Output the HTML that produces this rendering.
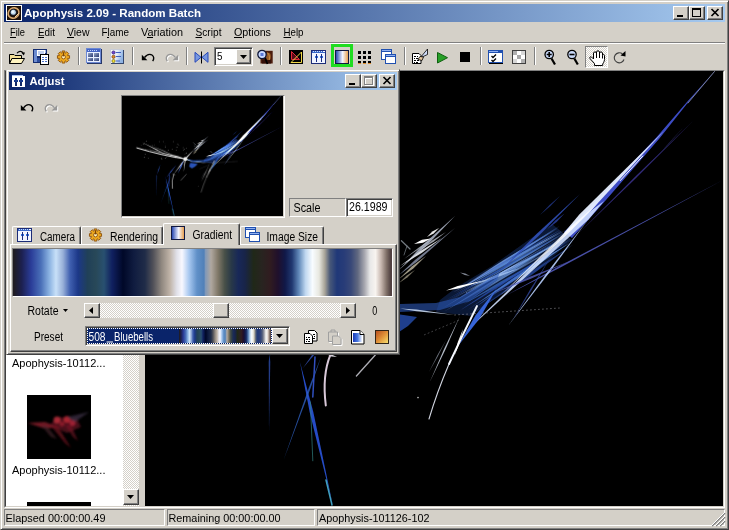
<!DOCTYPE html>
<html><head><meta charset="utf-8"><title>Apophysis</title>
<style>
*{box-sizing:border-box;margin:0;padding:0}
html,body{width:729px;height:530px;overflow:hidden;background:#d4d0c8;font-family:"Liberation Sans",sans-serif;font-size:11px;color:#000}
.a{position:absolute}
.title{background:linear-gradient(to right,#0a246a,#a6caf0)}
.btn{background:#d4d0c8;border:1px solid;border-color:#fff #404040 #404040 #fff;box-shadow:inset -1px -1px 0 #808080}
.raised{border:1px solid;border-color:#d4d0c8 #404040 #404040 #d4d0c8;box-shadow:inset 1px 1px 0 #fff,inset -1px -1px 0 #808080}
.sunk1{border:1px solid;border-color:#808080 #fff #fff #808080}
.sunk2{border:1px solid;border-color:#808080 #fff #fff #808080;box-shadow:inset 1px 1px 0 #404040,inset -1px -1px 0 #d4d0c8}
.dither{background-color:#fff;background-image:linear-gradient(45deg,#d4d0c8 25%,transparent 25%,transparent 75%,#d4d0c8 75%),linear-gradient(45deg,#d4d0c8 25%,transparent 25%,transparent 75%,#d4d0c8 75%);background-size:2px 2px;background-position:0 0,1px 1px}
.sep{width:2px;height:18px;top:47px;border-left:1px solid #808080;border-right:1px solid #fff}
.grad{background:linear-gradient(to right,#201c20 0.13%,#1c2050 2.30%,#2a3c98 4.75%,#4a70b8 7.39%,#88b0e0 9.50%,#c8e0f8 11.35%,#98b0d8 13.19%,#4060b0 15.04%,#1c3888 17.15%,#204058 19.66%,#284858 21.90%,#285070 24.01%,#102060 26.12%,#000828 29.02%,#101c40 31.93%,#202c48 34.83%,#505058 36.94%,#908880 39.21%,#c0b4a8 41.42%,#e0e0e8 43.19%,#f8f8ff 44.59%,#a8c8f0 46.44%,#6090c8 48.55%,#5080b8 50.40%,#8098b8 50.79%,#b0a8a0 52.24%,#807868 54.09%,#485048 55.86%,#283848 57.65%,#182858 59.47%,#182448 61.21%,#202818 63.46%,#282420 65.62%,#301c20 67.81%,#20102c 69.92%,#101848 71.77%,#203870 73.61%,#6088b8 75.41%,#c0d8f0 77.20%,#f8fcff 79.02%,#e8e8e0 80.74%,#a8a498 82.27%,#485878 83.64%,#203878 85.49%,#283c78 87.34%,#384878 89.18%,#606880 90.95%,#a8a8b0 92.77%,#e8e8e8 94.20%,#f8f4f0 95.67%,#c8b8b0 97.10%,#807068 98.55%,#504040 99.66%)}
svg{display:block;overflow:visible}
text{font-family:"Liberation Sans",sans-serif;white-space:pre}
</style></head><body>
<!-- main window frame -->
<div class="a raised" style="left:0;top:0;width:729px;height:530px;background:#d4d0c8"></div>
<div class="a title" style="left:4px;top:4px;width:721px;height:18px"></div>
<div class="a btn" style="left:673px;top:6px;width:16px;height:14px"></div>
<div class="a btn" style="left:689px;top:6px;width:16px;height:14px"></div>
<div class="a btn" style="left:707px;top:6px;width:16px;height:14px"></div>
<div class="a" style="left:677px;top:15px;width:6px;height:2px;background:#000"></div>
<div class="a" style="left:692px;top:8px;width:9px;height:9px;border:1px solid #000;border-top-width:2px"></div>
<svg class="a" style="left:711px;top:9px" width="8" height="7" viewBox="0 0 8 7"><path d="M0.5 0L7.5 7M7.5 0L0.5 7" stroke="#000" stroke-width="1.7"/></svg>
<!-- menu/toolbar separators -->
<div class="a" style="left:4px;top:42px;width:721px;height:1px;background:#808080"></div>
<div class="a" style="left:4px;top:43px;width:721px;height:1px;background:#fff"></div>

<!-- client area: sunken edge, list, splitter, view -->
<div class="a" style="left:4px;top:70px;width:721px;height:438px;border:1px solid;border-color:#808080 #fff #fff #808080"></div>
<div class="a" style="left:5px;top:71px;width:719px;height:436px;border:1px solid;border-color:#404040 #d4d0c8 #d4d0c8 #404040"></div>
<div class="a" style="left:6px;top:72px;width:117px;height:434px;background:#fff"></div>
<div class="a dither" style="left:123px;top:72px;width:16px;height:434px"></div>
<div class="a" style="left:139px;top:71px;width:6px;height:436px;background:#d4d0c8"></div>
<div class="a" style="left:145px;top:71px;width:578px;height:435px;background:#000;overflow:hidden" id="view">
<svg width="578" height="435" viewBox="0 0 578 435"><use href="#fr"/></svg>
</div>
<!-- list contents -->
<div class="a" style="left:27px;top:395px;width:64px;height:64px;background:#000;overflow:hidden" id="thumb">
<svg width="64" height="64" viewBox="0 0 64 64"><defs><filter id="tb" x="0" y="0" width="64" height="64" filterUnits="userSpaceOnUse"><feGaussianBlur stdDeviation="1.1"/></filter></defs><g filter="url(#tb)" opacity=".8">
<path d="M1 28L18 27L34 33L16 33z" fill="#b02838" opacity=".8"/>
<path d="M22 30L32 22L50 24L54 32L40 38z" fill="#80182c" opacity=".7"/>
<circle cx="30" cy="25" r="3.500" fill="#e03848" opacity=".9"/><circle cx="40" cy="24.500" r="3.500" fill="#e03040" opacity=".9"/><circle cx="45.500" cy="28" r="3" fill="#d83048" opacity=".85"/><circle cx="35" cy="29" r="2.500" fill="#c02838" opacity=".8"/>
<path d="M40 22L62 17L48 27z" fill="#50405c" opacity=".7"/>
<path d="M24 31L30 30L44 53L38 48z" fill="#901828" opacity=".7"/>
<path d="M38 30L44 30L51 46L46 42z" fill="#981c30" opacity=".6"/>
<path d="M14 30L20 31L30 44L24 42z" fill="#60303c" opacity=".6"/>
</g></svg></div>
<div class="a" style="left:27px;top:502px;width:64px;height:4px;background:#000"></div>
<div class="a btn" style="left:123px;top:489px;width:16px;height:16px"></div>
<svg class="a" style="left:127px;top:495px" width="7" height="4"><path d="M0 0h7L3.5 4z" fill="#000"/></svg>

<!-- status bar -->
<div class="a sunk1" style="left:4px;top:509px;width:161px;height:17px"></div>
<div class="a sunk1" style="left:167px;top:509px;width:148px;height:17px"></div>
<div class="a sunk1" style="left:317px;top:509px;width:408px;height:17px"></div>
<svg class="a" style="left:711px;top:512px" width="14" height="14" viewBox="0 0 14 14"><path d="M1 14L14 1M5 14L14 5M9 14L14 9" stroke="#808080" stroke-width="1.6"/><path d="M0 14L14 0M4 14L14 4M8 14L14 8" stroke="#fff" stroke-width="1"/></svg>

<!-- ===== Adjust window ===== -->
<div class="a" style="left:6px;top:69px;width:394px;height:286px;background:#d4d0c8;border:1px solid;border-color:#d4d0c8 #404040 #404040 #d4d0c8;box-shadow:inset 1px 1px 0 #fff,inset -1px -1px 0 #808080"></div>
<div class="a title" style="left:9px;top:72px;width:388px;height:18px"></div>
<div class="a btn" style="left:345px;top:74px;width:16px;height:14px"></div>
<div class="a btn" style="left:361px;top:74px;width:16px;height:14px"></div>
<div class="a btn" style="left:379px;top:74px;width:16px;height:14px"></div>
<div class="a" style="left:349px;top:83px;width:6px;height:2px;background:#000"></div>
<div class="a" style="left:365px;top:77px;width:9px;height:9px;border:1px solid #fff;border-top-width:2px"></div>
<div class="a" style="left:364px;top:76px;width:9px;height:9px;border:1px solid #808080;border-top-width:2px"></div>
<svg class="a" style="left:383px;top:77px" width="8" height="7" viewBox="0 0 8 7"><path d="M0.5 0L7.5 7M7.5 0L0.5 7" stroke="#000" stroke-width="1.7"/></svg>
<!-- preview -->
<div class="a" style="left:121px;top:95px;width:164px;height:123px;border:1px solid;border-color:#808080 #fff #fff #808080"></div>
<div class="a" style="left:122px;top:96px;width:161px;height:120px;background:#000;overflow:hidden" id="prev">
<svg width="161" height="120" viewBox="0 0 578 435" preserveAspectRatio="none" style="filter:brightness(1.3)"><use href="#fr"/></svg>
</div>
<!-- scale -->
<div class="a sunk1" style="left:289px;top:198px;width:57px;height:19px"></div>
<div class="a sunk2" style="left:346px;top:198px;width:47px;height:19px;background:#fff"></div>
<!-- tabs -->
<div class="a" id="tabs">
 <div class="a" style="left:10px;top:244px;width:387px;height:108px;border:1px solid;border-color:#fff #404040 #404040 #fff;box-shadow:inset -1px -1px 0 #808080"></div>
 <div class="a tab" style="left:12px;top:226px;width:69px;height:18px"></div>
 <div class="a tab" style="left:81px;top:226px;width:82px;height:18px"></div>
 <div class="a tab" style="left:240px;top:226px;width:84px;height:18px"></div>
 <div class="a tab" style="left:163px;top:223px;width:77px;height:22px;background:#d4d0c8"></div>
</div>
<style>.tab{border:1px solid;border-color:#fff #404040 transparent #fff;border-bottom:none;border-radius:2px 2px 0 0;box-shadow:inset -1px 0 0 #808080}</style>
<!-- gradient bar -->
<div class="a sunk1" style="left:12px;top:248px;width:381px;height:49px"></div>
<div class="a grad" style="left:13px;top:249px;width:379px;height:47px"></div>
<!-- rotate scrollbar -->
<div class="a dither" style="left:84px;top:303px;width:272px;height:15px"></div>
<div class="a btn" style="left:84px;top:303px;width:16px;height:15px"></div>
<div class="a btn" style="left:340px;top:303px;width:16px;height:15px"></div>
<div class="a btn" style="left:213px;top:303px;width:16px;height:15px"></div>
<svg class="a" style="left:89px;top:307px" width="4" height="7"><path d="M4 0v7L0 3.5z" fill="#000"/></svg>
<svg class="a" style="left:346px;top:307px" width="4" height="7"><path d="M0 0v7L4 3.5z" fill="#000"/></svg>
<svg class="a" style="left:63px;top:309px" width="5" height="3"><path d="M0 0h5L2.5 3z" fill="#000"/></svg>
<!-- preset combo -->
<div class="a sunk2" style="left:85px;top:326px;width:205px;height:20px;background:#fff"></div>
<div class="a" style="left:87px;top:328px;width:185px;height:16px;background:#0a246a;outline:1px dotted #fff;outline-offset:-1px"></div>
<div class="a grad" style="left:179px;top:329px;width:92px;height:14px"></div>
<div class="a btn" style="left:272px;top:328px;width:16px;height:16px"></div>
<svg class="a" style="left:276px;top:334px" width="7" height="4"><path d="M0 0h7L3.5 4z" fill="#000"/></svg>

<!-- toolbar combobox -->
<div class="a sunk2" style="left:214px;top:47px;width:39px;height:19px;background:#fff"></div>
<div class="a btn" style="left:236px;top:49px;width:15px;height:15px"></div>
<svg class="a" style="left:240px;top:55px" width="7" height="4"><path d="M0 0h7L3.5 4z" fill="#000"/></svg>
<!-- toolbar separators -->
<div class="a sep" style="left:78px"></div><div class="a sep" style="left:132px"></div><div class="a sep" style="left:186px"></div><div class="a sep" style="left:280px"></div><div class="a sep" style="left:404px"></div><div class="a sep" style="left:480px"></div><div class="a sep" style="left:534px"></div>
<svg width="0" height="0" style="position:absolute"><defs>
<linearGradient id="gBW" x1="0" x2="1" y1="0" y2="0"><stop offset="0" stop-color="#2848b0"/><stop offset=".55" stop-color="#f4f6ff"/><stop offset="1" stop-color="#e8a050"/></linearGradient>
<linearGradient id="gOR" x1="0" x2="1" y1="0" y2="1"><stop offset="0" stop-color="#b85020"/><stop offset=".5" stop-color="#e09038"/><stop offset="1" stop-color="#f8e070"/></linearGradient>
<linearGradient id="gDoc" x1="0" x2="1" y1="0" y2="0"><stop offset="0" stop-color="#1838b8"/><stop offset=".5" stop-color="#4878e0"/><stop offset="1" stop-color="#f0f4ff"/></linearGradient>
<linearGradient id="gLst" x1="0" x2="1" y1="0" y2="0.300"><stop offset="0" stop-color="#ffffff"/><stop offset=".55" stop-color="#e4ecf8"/><stop offset="1" stop-color="#90b4e4"/></linearGradient><linearGradient id="gSq" x1="0" x2="1" y1="0" y2="1"><stop offset="0" stop-color="#98a8c8"/><stop offset="1" stop-color="#283870"/></linearGradient>
<!-- adjust icon 15x14 -->
<g id="iAdj" shape-rendering="crispEdges"><rect x="0" y="0" width="15" height="14" fill="#1c2c78"/><rect x="1" y="1" width="13" height="2" fill="#3868c8"/><rect x="1" y="3" width="13" height="10" fill="#f0f4ff"/><rect x="2" y="1" width="1" height="1" fill="#c8dcff"/><rect x="4" y="1" width="1" height="1" fill="#c8dcff"/><rect x="6" y="1" width="1" height="1" fill="#c8dcff"/><rect x="8" y="1" width="1" height="1" fill="#c8dcff"/><rect x="10" y="1" width="1" height="1" fill="#c8dcff"/><rect x="12" y="1" width="2" height="1" fill="#fff"/><rect x="5" y="4" width="1" height="8" fill="#182c80"/><rect x="10" y="4" width="1" height="8" fill="#182c80"/><rect x="4" y="6" width="3" height="2" fill="#3070e0"/><rect x="9" y="6" width="3" height="2" fill="#3070e0"/><rect x="5" y="6" width="1" height="2" fill="#182c80"/><rect x="10" y="6" width="1" height="2" fill="#182c80"/></g>
<!-- gear 13x12 -->
<g id="iGear"><path d="M5.15 -0.05L7.85 -0.05L7.93 1.95L8.35 2.12L9.82 0.76L11.74 2.68L10.38 4.15L10.55 4.57L12.55 4.65L12.55 7.35L10.55 7.43L10.38 7.85L11.74 9.32L9.82 11.24L8.35 9.88L7.93 10.05L7.85 12.05L5.15 12.05L5.07 10.05L4.65 9.88L3.18 11.24L1.26 9.32L2.62 7.85L2.45 7.43L0.45 7.35L0.45 4.65L2.45 4.57L2.62 4.15L1.26 2.68L3.18 0.76L4.65 2.12L5.07 1.95z" fill="#eca820" stroke="#8c5008" stroke-width="0.9" stroke-linejoin="round"/><circle cx="6.5" cy="6" r="1.9" fill="#fff4c0" stroke="#8c5008" stroke-width="0.9"/><rect x="5.9" y="1.2" width="1.2" height="4.2" fill="#7c4408"/></g>
<!-- gradient icon 14x14 -->
<g id="iGrad" shape-rendering="crispEdges"><rect x="0" y="0" width="14" height="14" fill="#101840"/><rect x="1" y="1" width="12" height="12" fill="url(#gBW)"/></g>
<!-- windows icon 15x15 -->
<g id="iWin" shape-rendering="crispEdges"><rect x="0" y="0" width="11" height="11" fill="#2050b0"/><rect x="1" y="3" width="9" height="7" fill="#fff"/><rect x="1" y="1" width="9" height="1" fill="#90b0f0"/><rect x="4" y="5" width="11" height="10" fill="#2050b0"/><rect x="5" y="8" width="9" height="6" fill="#fff"/><rect x="5" y="6" width="9" height="1" fill="#90b0f0"/></g>
<!-- undo 13x8 -->
<g id="iUndo"><path d="M0.300 1.200V6.800H5.900z" stroke="none"/><path d="M3 4C5 1.300 8.200 0.100 10.500 1.500C12.600 2.800 12.700 5.400 11.200 7.600" fill="none" stroke-width="1.400"/></g>
</defs></svg>

<!-- toolbar icons -->
<svg class="a" style="left:0;top:44px" width="729" height="26" viewBox="0 44 729 26">
<!-- open folder -->
<g transform="translate(9,50)"><path d="M0.500 13.500V4.500H5L6 5.500H12.500V8.500H3z" fill="#f4e098" stroke="#000" stroke-width="1"/><path d="M0.500 13.500L3 8.500H15.500L12.500 13.500z" fill="#fff4c0" stroke="#000" stroke-width="1"/><path d="M8 3.300C9.500 0.800 12.500 0.600 14.200 3" fill="none" stroke="#000" stroke-width="1.200"/><path d="M12.200 2.600h3.800l-1.200 3z" fill="#000"/></g>
<!-- save -->
<g transform="translate(33,49)" shape-rendering="crispEdges"><rect x="0" y="0" width="14" height="14" fill="#142c70"/><rect x="1" y="1" width="3" height="12" fill="#6c8cd0"/><rect x="4" y="1" width="8" height="6" fill="#fff"/><rect x="5" y="2" width="6" height="4" fill="#c0d0f0"/><rect x="12" y="1" width="1" height="3" fill="#a0b8e8"/><rect x="4" y="9" width="5" height="4" fill="#2c4c9c"/><rect x="7" y="5" width="9" height="11" fill="#000"/><rect x="8" y="6" width="7" height="9" fill="#fff"/><rect x="9" y="8" width="2" height="1" fill="#4870c8"/><rect x="12" y="8" width="2" height="1" fill="#4870c8"/><rect x="9" y="10" width="2" height="1" fill="#4870c8"/><rect x="12" y="10" width="2" height="1" fill="#4870c8"/><rect x="9" y="12" width="2" height="1" fill="#4870c8"/><rect x="12" y="12" width="2" height="1" fill="#4870c8"/></g>
<use href="#iGear" x="57" y="51"/>
<!-- grid window -->
<g transform="translate(86,48)" shape-rendering="crispEdges"><rect x="1" y="1" width="15" height="15" fill="#283868"/><rect x="0" y="0" width="15" height="15" fill="#6c88d4"/><rect x="1" y="1" width="13" height="3" fill="#4464c4"/><rect x="2" y="2" width="1" height="1" fill="#c0d0f8"/><rect x="4" y="2" width="1" height="1" fill="#c0d0f8"/><rect x="6" y="2" width="1" height="1" fill="#c0d0f8"/><rect x="8" y="2" width="1" height="1" fill="#c0d0f8"/><rect x="10" y="2" width="1" height="1" fill="#c0d0f8"/><rect x="1" y="4" width="13" height="10" fill="#eaf0ff"/><rect x="2" y="5" width="5" height="4" fill="url(#gSq)"/><rect x="8" y="5" width="5" height="4" fill="url(#gSq)"/><rect x="2" y="10" width="5" height="3" fill="url(#gSq)"/><rect x="8" y="10" width="5" height="3" fill="url(#gSq)"/></g>
<!-- list -->
<g transform="translate(110,49)"><rect x="1" y="1" width="13" height="14" fill="#34466c" shape-rendering="crispEdges"/><rect x="0" y="0" width="13" height="14" fill="#c8ccd8" shape-rendering="crispEdges"/><rect x="1" y="1" width="12" height="13" fill="url(#gLst)" shape-rendering="crispEdges"/><circle cx="3.500" cy="3.500" r="1.600" fill="#7048d0" stroke="#301870" stroke-width="0.700"/><circle cx="3.500" cy="7.800" r="1.600" fill="#e08828" stroke="#704010" stroke-width="0.700"/><circle cx="3.500" cy="12" r="1.600" fill="#f0e030" stroke="#706010" stroke-width="0.700"/><rect x="6" y="3" width="5" height="1" fill="#4060c0"/><rect x="6" y="7" width="5" height="1" fill="#4060c0"/><rect x="6" y="11.500" width="4" height="1" fill="#4060c0"/></g>
<use href="#iUndo" x="141.500" y="53.500" fill="#000" stroke="#000"/>
<g transform="translate(178.500,53.500) scale(-1,1)"><use href="#iUndo" x="-1" y="1" fill="#fff" stroke="#fff"/><use href="#iUndo" fill="#989898" stroke="#989898"/></g>
<!-- mirror -->
<g transform="translate(194.5,51.5)"><path d="M0.5 0.8L6.5 5.8L0.5 10.8z" fill="#7898e0" stroke="#2848b8" stroke-width="1"/><path d="M13.5 0.8L7.5 5.8L13.5 10.8z" fill="#7898e0" stroke="#2848b8" stroke-width="1"/><rect x="6.5" y="0" width="1" height="12" fill="#000"/></g>
<!-- magnifier face -->
<g transform="translate(257,49.500)"><rect x="3.500" y="1.300" width="12.200" height="12.700" fill="#4c1c0c"/><ellipse cx="11.500" cy="7" rx="2.400" ry="3.800" fill="#a06028" opacity=".85"/><path d="M10 3c2 1 3 4 2 9" stroke="#d8a050" stroke-width="0.800" fill="none"/><rect x="5" y="10.500" width="9" height="3.500" fill="#341008"/><path d="M8 8.500l2.500 6" stroke="#000" stroke-width="1.800"/><circle cx="5" cy="5" r="4.200" fill="#c8d8ff" stroke="#101838" stroke-width="1.300"/><rect x="3.500" y="3.500" width="3" height="3" fill="#5878d8"/></g>
<!-- triangle icon -->
<g transform="translate(289,50)"><rect width="14" height="14" fill="#000" shape-rendering="crispEdges"/><path d="M2.500 1.500V9.500H10.500z" fill="#580818" stroke="#e02838" stroke-width="1"/><path d="M2 12.500L12.500 2V12.500z" fill="none" stroke="#f0d848" stroke-width="1"/></g>
<use href="#iAdj" x="311" y="50"/>
<!-- gradient w/ green highlight -->
<rect x="331" y="44" width="22" height="23" fill="#20dc20" shape-rendering="crispEdges"/>
<rect x="334" y="47" width="16" height="17" fill="#d4d0c8" shape-rendering="crispEdges"/>
<use href="#iGrad" x="335" y="50"/>
<!-- dots grid -->
<g transform="translate(358,51)" shape-rendering="crispEdges" fill="#000"><rect x="0" y="0" width="3" height="3"/><rect x="5" y="0" width="3" height="3"/><rect x="10" y="0" width="3" height="3"/><rect x="0" y="5" width="3" height="3"/><rect x="5" y="5" width="3" height="3"/><rect x="10" y="5" width="3" height="3"/><rect x="0" y="10" width="3" height="3"/><rect x="5" y="10" width="3" height="3"/><rect x="10" y="10" width="3" height="3"/><rect x="0" y="12" width="3" height="1" fill="#e09030"/><rect x="5" y="12" width="3" height="1" fill="#e09030"/><rect x="10" y="12" width="3" height="1" fill="#e09030"/></g>
<use href="#iWin" x="381" y="49"/>
<!-- script edit -->
<g transform="translate(412,49)"><path d="M0.500 4.500h6.500l2 2v8h-8.500z" fill="#fff" stroke="#000" stroke-width="1"/><g fill="#000" shape-rendering="crispEdges"><rect x="2" y="7" width="2" height="1"/><rect x="5" y="7" width="1" height="1"/><rect x="2" y="9" width="1" height="1"/><rect x="4" y="9" width="2" height="1"/><rect x="2" y="11" width="2" height="1"/><rect x="5" y="11" width="2" height="1"/><rect x="2" y="13" width="1" height="1"/><rect x="4" y="13" width="2" height="1"/></g><path d="M8 9L15.500 0V5.500z" fill="#d0dcf8" stroke="#000" stroke-width="0.800" stroke-linejoin="round"/><path d="M6 10.500l2-3 3.500 0.500-1.500 3.500z" fill="#e8c8a0" stroke="#000" stroke-width="0.800"/></g>
<!-- play / stop -->
<path d="M437.5 52.5L447.5 57.7L437.5 63z" fill="#28a028" stroke="#106010" stroke-width="1"/>
<rect x="460" y="52" width="10" height="10" fill="#000" shape-rendering="crispEdges"/>
<!-- options -->
<g transform="translate(488,50)" shape-rendering="crispEdges"><rect x="1" y="13" width="14" height="1" fill="#000"/><rect x="0" y="0" width="15" height="13" fill="#2050b0"/><rect x="1" y="3" width="13" height="9" fill="#fff"/><rect x="1" y="1" width="9" height="1" fill="#90b0f0"/></g>
<path d="M491.500 56l1.500 1.500 3-3M491.500 60l1.500 1.500 3-3" stroke="#000" stroke-width="1.300" fill="none"/>
<!-- checker -->
<g transform="translate(512,50)" shape-rendering="crispEdges"><rect x="0" y="0" width="14" height="14" fill="#404040"/><rect x="1" y="1" width="12" height="12" fill="#fff"/><rect x="1" y="1" width="4" height="4" fill="#b0b0b0"/><rect x="9" y="1" width="4" height="4" fill="#d8d8d8"/><rect x="5" y="5" width="4" height="4" fill="#a8a8a8"/><rect x="1" y="9" width="4" height="4" fill="#d8d8d8"/><rect x="9" y="9" width="4" height="4" fill="#b0b0b0"/></g>
<!-- zoom in/out -->
<g><path d="M551.5 58.5L555 64.500" stroke="#000" stroke-width="2.200"/><circle cx="549.200" cy="54.500" r="4.200" fill="#c8d8f8" stroke="#000" stroke-width="1.300"/><path d="M546.700 54.500h5M549.200 52v5" stroke="#000" stroke-width="1.600"/></g>
<g><path d="M574.300 58.500L577.800 64.500" stroke="#000" stroke-width="2.200"/><circle cx="572" cy="54.500" r="4.200" fill="#c8d8f8" stroke="#000" stroke-width="1.300"/><path d="M569.500 54.500h5" stroke="#000" stroke-width="1.600"/></g>
<!-- rotate -->
<path d="M622.500 54A5 5 0 1 0 624 59.500" fill="none" stroke="#404040" stroke-width="1.100"/><path d="M620.500 55.500L625.500 51v5.500z" fill="#000"/>
</svg>
<!-- hand pressed button -->
<div class="a dither" style="left:585px;top:46px;width:23px;height:22px;border:1px solid;border-color:#808080 #fff #fff #808080"></div>
<svg class="a" style="left:589px;top:50px" width="16" height="16" viewBox="0 0 16 16"><path d="M5.500 15.500V13.500L1.200 8.800C0.200 7.600 1 6.200 2.500 7L4.500 9V3C4.500 1.600 7.500 1.600 7.500 3V2C7.500 0.400 10.500 0.400 10.500 2V3C10.500 1.600 13.500 1.600 13.500 3V5.500C13.500 4.300 15.500 4.300 15.500 5.500V9.500C15.500 12 13.500 13 13.500 15.500z" fill="#fff" stroke="#000" stroke-width="1"/><path d="M7.500 3V8M10.500 3V8M13.500 5.500V8.500" stroke="#000" stroke-width="1" fill="none"/></svg>

<!-- main title icon -->
<svg class="a" style="left:6px;top:5px" width="16" height="16" viewBox="0 0 16 16"><rect width="16" height="16" fill="#fff"/><rect x="1" y="1" width="14" height="14" fill="#1c1008"/><ellipse cx="7.600" cy="8" rx="5.600" ry="5" fill="none" stroke="#d8a870" stroke-width="1.600" transform="rotate(-35 7.600 8)"/><path d="M9 12l4-4" stroke="#f0d0a0" stroke-width="1"/><circle cx="7.300" cy="7.300" r="3.300" fill="#202838"/><circle cx="7.300" cy="7.300" r="2.500" fill="#c4dcec"/><circle cx="6.800" cy="6.800" r="1.200" fill="#f4fcff"/></svg>

<!-- adjust window icons -->
<svg class="a" style="left:0;top:70px" width="410" height="285" viewBox="0 70 410 285">
<g shape-rendering="crispEdges"><rect x="12" y="76" width="13" height="11" fill="#fff"/><rect x="12" y="75" width="11" height="1" fill="#a8c0f0"/><rect x="15" y="78" width="2" height="8" fill="#102868"/><rect x="20" y="78" width="2" height="8" fill="#102868"/><rect x="14" y="80" width="4" height="2" fill="#183c90"/><rect x="19" y="80" width="4" height="2" fill="#183c90"/></g>
<use href="#iUndo" x="20.500" y="103.800" fill="#000" stroke="#000"/>
<g transform="translate(57.500,103.800) scale(-1,1)"><use href="#iUndo" x="-1" y="1" fill="#fff" stroke="#fff"/><use href="#iUndo" fill="#989898" stroke="#989898"/></g>
<use href="#iAdj" x="17" y="228"/>
<use href="#iGear" x="89" y="229"/>
<use href="#iGrad" x="171" y="225.500"/>
<use href="#iWin" x="245" y="227"/>
<!-- copy -->
<g transform="translate(304,330)"><path d="M4.500 0.500h6l2.500 2.500v8h-8.500z" fill="#fff" stroke="#000"/><path d="M0.500 3.500h5.500l2.500 2.500v7.500h-8z" fill="#fff" stroke="#000"/><g fill="#000" shape-rendering="crispEdges"><rect x="2" y="7" width="1" height="1"/><rect x="4" y="7" width="2" height="1"/><rect x="2" y="9" width="2" height="1"/><rect x="5" y="9" width="1" height="1"/><rect x="2" y="11" width="1" height="1"/><rect x="4" y="11" width="2" height="1"/><rect x="9" y="4" width="2" height="1"/><rect x="10" y="6" width="1" height="1"/><rect x="9" y="8" width="2" height="1"/></g></g>
<!-- paste disabled -->
<g transform="translate(327,329.500)"><path d="M1.500 2.500h9v9.500h-9z" fill="none" stroke="#fff" transform="translate(1,1)"/><path d="M5.500 6.500h6l2.500 2.500v6h-8.500z" fill="none" stroke="#fff" transform="translate(1,1)"/><path d="M1.500 2.500h9v9.500h-9z" fill="#d4d0c8" stroke="#a0a0a0"/><path d="M4 2.500v-2h4v2" fill="none" stroke="#a0a0a0"/><path d="M5.500 6.500h6l2.500 2.500v6h-8.500z" fill="#d4d0c8" stroke="#a0a0a0"/></g>
<!-- doc blue -->
<g transform="translate(351,330)"><path d="M0.500 0.500h8.500l4 4v9.500h-12.500z" fill="#fff" stroke="#000"/><rect x="2" y="3" width="9" height="9" fill="url(#gDoc)"/><path d="M9 0.500v4h4" fill="#fff" stroke="#000"/></g>
<!-- gradient orange -->
<rect x="375" y="330" width="14" height="14" fill="#302418" shape-rendering="crispEdges"/><rect x="376" y="331" width="12" height="12" fill="url(#gOR)" shape-rendering="crispEdges"/>
</svg>

<!-- all text -->
<svg class="a" style="left:0;top:0" width="729" height="530" viewBox="0 0 729 530">
<text x="24" y="17" font-size="11" font-weight="bold" fill="#fff" textLength="177.0" lengthAdjust="spacingAndGlyphs">Apophysis 2.09 - Random Batch</text>
<text x="10" y="36" font-size="11" fill="#000" textLength="15.0" lengthAdjust="spacingAndGlyphs">File</text>
<text x="38" y="36" font-size="11" fill="#000" textLength="17.0" lengthAdjust="spacingAndGlyphs">Edit</text>
<text x="67" y="36" font-size="11" fill="#000" textLength="22.5" lengthAdjust="spacingAndGlyphs">View</text>
<text x="101.5" y="36" font-size="11" fill="#000" textLength="27.5" lengthAdjust="spacingAndGlyphs">Flame</text>
<text x="141" y="36" font-size="11" fill="#000" textLength="42.0" lengthAdjust="spacingAndGlyphs">Variation</text>
<text x="195.5" y="36" font-size="11" fill="#000" textLength="26.0" lengthAdjust="spacingAndGlyphs">Script</text>
<text x="234" y="36" font-size="11" fill="#000" textLength="37.0" lengthAdjust="spacingAndGlyphs">Options</text>
<text x="283.5" y="36" font-size="11" fill="#000" textLength="20.0" lengthAdjust="spacingAndGlyphs">Help</text>
<rect x="10" y="37" width="6" height="1" fill="#000"/>
<rect x="38" y="37" width="6" height="1" fill="#000"/>
<rect x="67" y="37" width="7" height="1" fill="#000"/>
<rect x="107" y="37" width="2" height="1" fill="#000"/>
<rect x="147" y="37" width="6" height="1" fill="#000"/>
<rect x="195.5" y="37" width="6.5" height="1" fill="#000"/>
<rect x="234" y="37" width="8" height="1" fill="#000"/>
<rect x="283.5" y="37" width="7.5" height="1" fill="#000"/>
<text x="217" y="60" font-size="11" fill="#000" textLength="5.5" lengthAdjust="spacingAndGlyphs">5</text>
<text x="29.5" y="85" font-size="11" font-weight="bold" fill="#fff" textLength="35.0" lengthAdjust="spacingAndGlyphs">Adjust</text>
<text x="293.5" y="212" font-size="12" fill="#000" textLength="27.0" lengthAdjust="spacingAndGlyphs">Scale</text>
<text x="349" y="211" font-size="12" fill="#000" textLength="38.5" lengthAdjust="spacingAndGlyphs">26.1989</text>
<text x="40" y="240.5" font-size="12" fill="#000" textLength="35.0" lengthAdjust="spacingAndGlyphs">Camera</text>
<text x="110" y="240.5" font-size="12" fill="#000" textLength="48.0" lengthAdjust="spacingAndGlyphs">Rendering</text>
<text x="192.5" y="238.5" font-size="12" fill="#000" textLength="39.5" lengthAdjust="spacingAndGlyphs">Gradient</text>
<text x="266.5" y="240.5" font-size="12" fill="#000" textLength="51.5" lengthAdjust="spacingAndGlyphs">Image Size</text>
<text x="27.5" y="315" font-size="12" fill="#000" textLength="31.0" lengthAdjust="spacingAndGlyphs">Rotate</text>
<text x="372.3" y="314.5" font-size="12" fill="#000" textLength="5.0" lengthAdjust="spacingAndGlyphs">0</text>
<text x="34" y="341" font-size="12" fill="#000" textLength="29.0" lengthAdjust="spacingAndGlyphs">Preset</text>
<text x="88.5" y="341" font-size="12" fill="#fff" textLength="17.0" lengthAdjust="spacingAndGlyphs">508</text>
<text x="114" y="341" font-size="12" fill="#fff" textLength="39.0" lengthAdjust="spacingAndGlyphs">Bluebells</text>
<rect x="106.5" y="341.5" width="6.5" height="1" fill="#fff"/>
<text x="12" y="367" font-size="11" fill="#000" textLength="93.5" lengthAdjust="spacingAndGlyphs">Apophysis-10112...</text>
<text x="12" y="474" font-size="11" fill="#000" textLength="93.5" lengthAdjust="spacingAndGlyphs">Apophysis-10112...</text>
<text x="5.5" y="522" font-size="11" fill="#000" textLength="100.0" lengthAdjust="spacingAndGlyphs">Elapsed 00:00:00.49</text>
<text x="168.5" y="522" font-size="11" fill="#000" textLength="112.0" lengthAdjust="spacingAndGlyphs">Remaining 00:00:00.00</text>
<text x="319" y="522" font-size="11" fill="#000" textLength="110.5" lengthAdjust="spacingAndGlyphs">Apophysis-101126-102</text>
</svg>
<!-- fractal definition -->
<svg width="0" height="0" style="position:absolute"><defs><filter id="fb" x="0" y="0" width="578" height="435" filterUnits="userSpaceOnUse"><feGaussianBlur stdDeviation="0.45"/></filter><g id="fr"><g filter="url(#fb)"><path d="M570 0L543 31.6L514 68L461 129L427 167L419 161L454 127L511.5 66.3L542.2 30.8z" fill="#3c4cc4"/><path d="M519 60L434.3 143.4L409 174L438.7 147.6z" fill="#e8f0ff" opacity="0.95"/><path d="M569.5 0.5L543 32" stroke="#9098c0" stroke-width="1" fill="none" stroke-linecap="round" opacity="0.8"/><path d="M497.8 85L475.2 109.6" stroke="#ffffff" stroke-width="1" fill="none" stroke-linecap="round"/><path d="M548 50L489.9 105.9L433 163L491.1 107.1z" fill="#3c3490" opacity="0.85"/><path d="M539.5 55L523.9 71.7L509 89L524.6 72.3z" fill="#24244c" opacity="0.8"/><path d="M578 109L414.1 195.2L360 225L414.9 196.8z" fill="#5058b8" opacity="0.9"/><path d="M407 153L385 168L347 195L312 216L295 229L291 241L326 245L353 225L385 206L427 169z" fill="#1c3878" opacity="0.45"/><path d="M415.2 154.4L349.9 194.8L317.8 216.7L351.1 196.7z" fill="#6898e0" opacity="0.68"/><path d="M413.9 156L378.7 176.8L315.1 218.2L379.9 178.7z" fill="#3868c8" opacity="0.78"/><path d="M418.6 158.6L359 191.4L326.7 210.9L360 193.1z" fill="#2850b0" opacity="0.47"/><path d="M412.5 157.5L358.2 189.2L311.2 219.8L359.7 191.6z" fill="#88b0e8" opacity="0.49"/><path d="M417.8 159.6L365.4 187.7L307.9 221.5L366.6 189.8z" fill="#a8c8f8" opacity="0.72"/><path d="M416.2 158.6L374.6 181.1L318.7 215.1L376 183.5z" fill="#2850b0" opacity="0.48"/><path d="M416.7 161L369.7 186.6L309.9 220.9L370.4 187.8z" fill="#2c58b8" opacity="0.52"/><path d="M421.3 158.4L371.9 185.5L310.2 222.3L373 187.5z" fill="#6898e0" opacity="0.59"/><path d="M414.7 159L360.1 191.5L321.5 216.2L361 193z" fill="#5088d8" opacity="0.47"/><path d="M421.3 160.7L374.8 186L326.3 214.5L375.7 187.7z" fill="#6898e0" opacity="0.46"/><path d="M415.7 164.2L337.8 207.4L299.4 229.9L338.5 208.6z" fill="#2850b0" opacity="0.61"/><path d="M418.9 161.8L369.4 189.8L299.4 231.4L370.1 191.1z" fill="#2c58b8" opacity="0.8"/><path d="M423.3 166.5L356.2 201.1L304.9 229.1L356.9 202.4z" fill="#88b0e8" opacity="0.51"/><path d="M418.2 163L375.8 187.1L319.8 221L376.5 188.4z" fill="#6898e0" opacity="0.69"/><path d="M424.9 165.8L360.1 199L320.1 221.9L361.4 201.3z" fill="#a8c8f8" opacity="0.81"/><path d="M420.9 164.8L387.2 184.1L318.8 225.6L387.9 185.3z" fill="#2c58b8" opacity="0.47"/><path d="M421 163.3L336.7 213.1L297.5 237.3L337.4 214.1z" fill="#88b0e8" opacity="0.66"/><path d="M420.5 165.8L360.6 201.3L299.4 240.5L361.9 203.4z" fill="#6898e0" opacity="0.69"/><path d="M427.2 167L376.7 194.9L312.6 232.7L377.6 196.5z" fill="#88b0e8" opacity="0.49"/><path d="M421.2 164.8L371.3 195.8L326.4 227.2L373 198.4z" fill="#6898e0" opacity="0.51"/><path d="M428.2 170.4L354.8 211L318.5 233.3L356.1 213.3z" fill="#4078d0" opacity="0.66"/><path d="M425.3 168.8L355.2 212.2L314.6 239.7L356.5 214.3z" fill="#2850b0" opacity="0.77"/><path d="M425.6 168.5L374.6 202.6L322.1 239.3L375.4 203.6z" fill="#3868c8" opacity="0.77"/><path d="M424.7 171.7L382.7 197.7L332.2 232.4L384.2 199.9z" fill="#6898e0" opacity="0.83"/><path d="M424.1 168.7L368.4 207.2L326.2 239.2L369.8 209.2z" fill="#3868c8" opacity="0.64"/><path d="M428.3 173.5L390.7 197.6L329.1 241.5L392.2 199.9z" fill="#2850b0" opacity="0.64"/><path d="M459 130L440 144.2L316 265L443.7 148.2z" fill="#d0e0ff" opacity="0.9"/><path d="M453 132L422.6 158.8L355 225L424.6 161z" fill="#ffffff" opacity="0.8"/><path d="M445 146L403.2 199.9L363 255L404.8 201.1z" fill="#b8d0ff" opacity="0.9"/><path d="M435 123L391.5 162.9L350 205L393.5 165.1z" fill="#3050b8" opacity="0.9"/><path d="M419.5 142.6L410.3 149.4L402.5 157.7L411.7 150.9z" fill="#2c44a8" opacity="0.8"/><path d="M415 125L404.5 134L395 144L405.5 135z" fill="#2840a0" opacity="0.7"/><path d="M301 219.5L313.3 217.6L341 209L312.7 215.1z" fill="#ffffff"/><path d="M325 215L350.4 207.2L375 197L349.6 204.8z" fill="#a8c8f8" opacity="0.8"/><path d="M405.6 186L385.7 217.6L367 250L386.9 218.4z" fill="#3850b0" opacity="0.7"/><path d="M425 190L385.6 205.6L347 223L386.4 207.4z" fill="#5860c0" opacity="0.8"/><path d="M254 199L280.3 175.9L310 145L278.1 173.5z" fill="#a0a8b8" opacity="0.95"/><path d="M254 204L271.6 190.9L310 157L270 188.9z" fill="#8890a8" opacity="0.85"/><path d="M255 195L276.7 182.1L297 167L275.3 179.9z" fill="#e0e4e8" opacity="0.95"/><path d="M259 188L275.5 177.1L291 165L274.5 175.9z" fill="#b0b8c0" opacity="0.8"/><path d="M269 173L278 171.7L286 167.5L277 168.8z" fill="#ffffff"/><path d="M282 166L288.7 162.5L294 157L287.3 160.5z" fill="#f4f4f4" opacity="0.95"/><path d="M275 179L288.5 170.7L301 161L287.5 169.3z" fill="#c8ccd4" opacity="0.8"/><path d="M256.4 169.7L265 178" stroke="#889098" stroke-width="1.2" fill="none" stroke-linecap="round" opacity="0.85"/><path d="M262 175L259 184" stroke="#788088" stroke-width="1" fill="none" stroke-linecap="round" opacity="0.7"/><path d="M254 208L268.3 197.4L281 185L266.7 195.6z" fill="#c8c0a8" opacity="0.8"/><path d="M254 212L262.6 206.3L270 199L261.4 204.7z" fill="#b0a890" opacity="0.7"/><path d="M315 201.5L319.7 204L325 205L320.3 202.5z" fill="#a0a8b8" opacity="0.8"/><path d="M181 283L186.3 285.4L192 286L186.7 283.6z" fill="#e8e8f0" opacity="0.9"/><path d="M227 227L255 233L291 232L315 226L344 208L355 201L352 209L325 230L295 239L255 241z" fill="#2c58b8" opacity="0.6"/><path d="M245 242L272 246L263 255L251 263L241 255z" fill="#2850b0" opacity="0.8"/><path d="M255 237.4L271.3 240.2L309.6 244L271.5 238.6z" fill="#c8d8f0" opacity="0.9"/><path d="M309.6 244L415 237" stroke="#b0b0b8" stroke-width="1" fill="none" stroke-linecap="round" opacity="0.45" stroke-dasharray="1 3"/><path d="M279.4 263.8L315 248.7" stroke="#a0a0a8" stroke-width="1" fill="none" stroke-linecap="round" opacity="0.4" stroke-dasharray="1 3"/><path d="M352 217L330.4 244.6L313 275L334.6 247.4z" fill="#3868e0" opacity="0.95"/><path d="M332 235Q317 265 304 293" stroke="#f4f8ff" stroke-width="1.9" fill="none" stroke-linecap="round"/><path d="M304 293Q292 321 284 348" stroke="#e8ecf8" stroke-width="1.1" fill="none" stroke-linecap="round" opacity="0.9"/><path d="M315 245L299.3 277.4L285 310.5L300.7 278.1z" fill="#e0e8f8" opacity="0.8"/><path d="M318 258L312.8 271L309.6 284.6L314.8 271.6z" fill="#ffffff" opacity="0.9"/><path d="M301 269L292.1 284.8L284 301L292.9 285.2z" fill="#a0a8b8" opacity="0.7"/><path d="M124.6 283L123.7 290.8L124 361L125.3 290.8z" fill="#2848a0" opacity="0.85"/><path d="M155 291L164.8 341.8L188 435L168.3 341z" fill="#2850d0" opacity="0.95"/><path d="M176 286L163.8 316.8L138.3 389.8L165.5 317.4z" fill="#3060c0" opacity="0.8"/><path d="M185.5 283.7Q177 304 180.8 334.4" stroke="#d8c8d8" stroke-width="2" fill="none" stroke-linecap="round"/><path d="M170 286L167.8 326" stroke="#3050c0" stroke-width="1.5" fill="none" stroke-linecap="round"/><path d="M165.4 331L167.8 389.8" stroke="#308080" stroke-width="1" fill="none" stroke-linecap="round" opacity="0.7"/><path d="M230.3 284L211.4 305" stroke="#c0c0c8" stroke-width="1.3" fill="none" stroke-linecap="round" opacity="0.9"/><path d="M181 409L187 434" stroke="#40a0c0" stroke-width="1.5" fill="none" stroke-linecap="round"/><circle cx="273" cy="326.6" r="0.8" fill="#c0c0c0"/><path d="M53 188Q145 216 227 228" stroke="#eef0f4" stroke-width="3.5" fill="none" stroke-linecap="round"/><path d="M71 167L120.7 194.7L155 211L122.1 192.1z" fill="#d0d4dc" opacity="0.9"/><path d="M85 191L198 222.2L227 227L199.2 217.4z" fill="#ffffff" opacity="0.8"/><path d="M105 179L149.5 200.1L195 219L150.5 197.9z" fill="#c0c4cc" opacity="0.7"/><path d="M227 228L234.3 222.9L256 196L231.3 220.3z" fill="#e0e4e8" opacity="0.95"/><path d="M227 228L232 231.6L255 238L233.2 228.4z" fill="#a8c0e8" opacity="0.9"/><path d="M227 228L224.1 237L221 274L227.5 237.4z" fill="#f0f0f8" opacity="0.9"/><path d="M227 228L212.7 244L184 285L215.5 246.2z" fill="#c8c8e0" opacity="0.85"/><path d="M223 229L209.7 254.2L200 281L213.3 255.8z" fill="#4060c8" opacity="0.9"/><path d="M195 249L175.3 272.1L158 297L177.7 273.9z" fill="#3858c0" opacity="0.8"/><path d="M138 247L130.3 265.6L125 285L132.7 266.4z" fill="#3050b0" opacity="0.8"/><circle cx="227" cy="228" r="7" fill="#ffffff" opacity="0.9"/><circle cx="197" cy="185.6" r="1.440658855117353" fill="#d8dce4" opacity="0.7"/><circle cx="229.9" cy="189.7" r="1.1211094542941613" fill="#d8dce4" opacity="0.7"/><circle cx="225.4" cy="211.1" r="0.9360029279775164" fill="#d8dce4" opacity="0.7"/><circle cx="77.9" cy="173.8" r="1.5238816765865915" fill="#d8dce4" opacity="0.7"/><circle cx="200.2" cy="173.5" r="1.4612083828203097" fill="#d8dce4" opacity="0.7"/><circle cx="231.5" cy="206.7" r="1.0803260097260023" fill="#d8dce4" opacity="0.7"/><circle cx="153.8" cy="172.5" r="0.8113943505248845" fill="#d8dce4" opacity="0.7"/><circle cx="229.8" cy="206.2" r="1.2212648376792445" fill="#d8dce4" opacity="0.7"/><circle cx="223.1" cy="192.2" r="1.4973943423915235" fill="#d8dce4" opacity="0.7"/><circle cx="203.7" cy="177.7" r="1.0014678490923632" fill="#d8dce4" opacity="0.7"/><circle cx="107.7" cy="179.6" r="1.2691497345327694" fill="#d8dce4" opacity="0.7"/><circle cx="101.7" cy="191.2" r="0.9048589412027868" fill="#d8dce4" opacity="0.7"/><circle cx="218.8" cy="187" r="1.166528789177387" fill="#d8dce4" opacity="0.7"/><circle cx="160" cy="222.8" r="1.1365026165672523" fill="#d8dce4" opacity="0.7"/><circle cx="220.2" cy="196.6" r="1.2254599699487472" fill="#d8dce4" opacity="0.7"/><circle cx="149.2" cy="165.2" r="1.1520999299079548" fill="#d8dce4" opacity="0.7"/><circle cx="88" cy="164.3" r="1.4393363603937774" fill="#d8dce4" opacity="0.7"/><circle cx="86" cy="194.8" r="1.3801546163579024" fill="#d8dce4" opacity="0.7"/><circle cx="155.2" cy="185.2" r="1.2146789701624296" fill="#d8dce4" opacity="0.7"/><circle cx="155" cy="215" r="0.8848875336839427" fill="#d8dce4" opacity="0.7"/><circle cx="155.9" cy="180.2" r="1.0215336563718254" fill="#d8dce4" opacity="0.7"/><circle cx="194" cy="197" r="1.249383509325181" fill="#d8dce4" opacity="0.7"/><circle cx="191.8" cy="223.3" r="1.1545987148619512" fill="#d8dce4" opacity="0.7"/><circle cx="165.3" cy="196.9" r="1.2097291779482555" fill="#d8dce4" opacity="0.7"/><circle cx="179.7" cy="193.4" r="1.2266283500633368" fill="#d8dce4" opacity="0.7"/><circle cx="141" cy="225.2" r="1.3593743057442287" fill="#d8dce4" opacity="0.7"/><circle cx="212.8" cy="225.2" r="1.0076738352941526" fill="#d8dce4" opacity="0.7"/><circle cx="155.7" cy="225.3" r="1.4719998267145646" fill="#d8dce4" opacity="0.7"/><circle cx="79.7" cy="171.9" r="1.153694470620035" fill="#d8dce4" opacity="0.7"/><circle cx="68.1" cy="179.6" r="0.8584966135781396" fill="#d8dce4" opacity="0.7"/><circle cx="175.5" cy="215" r="1.5176211463030136" fill="#d8dce4" opacity="0.7"/><circle cx="82.8" cy="210.5" r="1.3282052121530967" fill="#d8dce4" opacity="0.7"/><circle cx="80.7" cy="221.4" r="1.574035826133107" fill="#d8dce4" opacity="0.7"/><circle cx="94.5" cy="225.9" r="1.1186054997738175" fill="#d8dce4" opacity="0.7"/><circle cx="142.7" cy="228.3" r="1.4659557355863582" fill="#d8dce4" opacity="0.7"/><circle cx="84.1" cy="192" r="1.2124840462434874" fill="#d8dce4" opacity="0.7"/><circle cx="116" cy="176.7" r="1.0548204546701552" fill="#d8dce4" opacity="0.7"/><circle cx="185" cy="165.3" r="1.2432401982466625" fill="#d8dce4" opacity="0.7"/><circle cx="134.3" cy="165.2" r="1.0651983113135925" fill="#d8dce4" opacity="0.7"/><circle cx="167.3" cy="197.3" r="0.8514326340726015" fill="#d8dce4" opacity="0.7"/></g></g></defs></svg>
</body></html>
